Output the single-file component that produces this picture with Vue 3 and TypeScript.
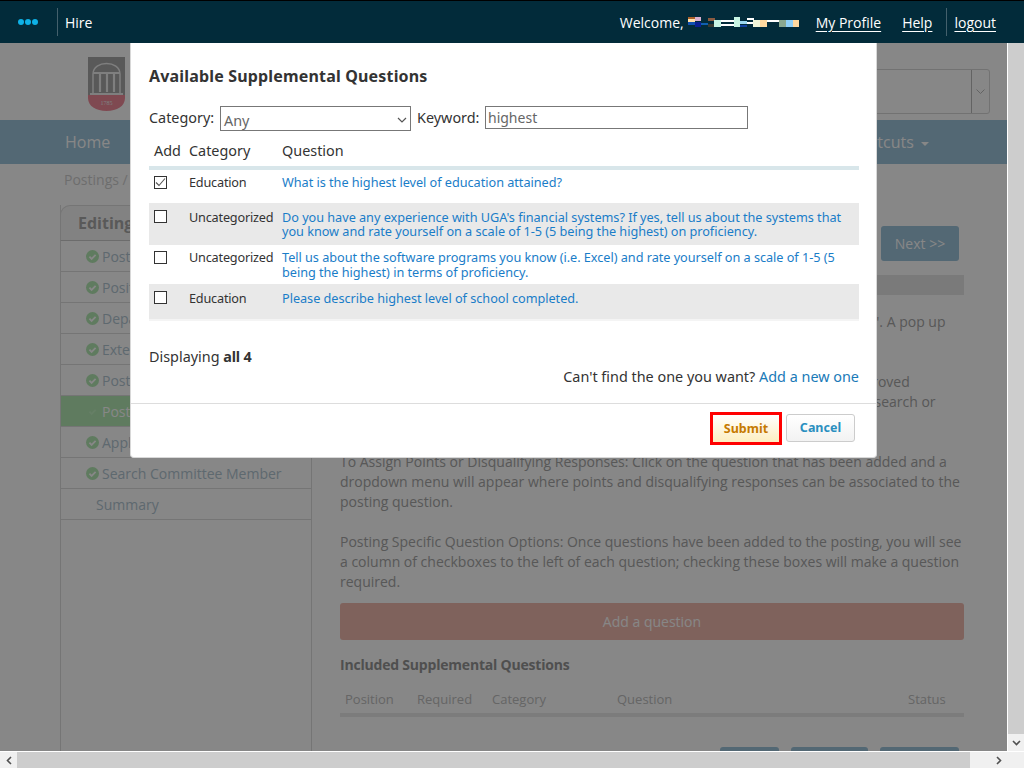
<script setup lang="ts">
const steps = [
  { label: 'Posting Details', done: true },
  { label: 'Position Details', done: true },
  { label: 'Department Details', done: true },
  { label: 'External Links', done: true },
  { label: 'Posting Documents', done: true },
  { label: 'Posting Questions', done: true, active: true },
  { label: 'Applicant Documents', done: true },
  { label: 'Search Committee Member', done: true },
  { label: 'Summary', done: false }
]

const questions = [
  { checked: true, category: 'Education', text: 'What is the highest level of education attained?', h: 'q1' },
  { checked: false, category: 'Uncategorized', text: "Do you have any experience with UGA's financial systems? If yes, tell us about the systems that you know and rate yourself on a scale of 1-5 (5 being the highest) on proficiency.", h: 'q2 alt' },
  { checked: false, category: 'Uncategorized', text: 'Tell us about the software programs you know (i.e. Excel) and rate yourself on a scale of 1-5 (5 being the highest) in terms of proficiency.', h: 'q3' },
  { checked: false, category: 'Education', text: 'Please describe highest level of school completed.', h: 'q4 alt' }
]
</script>

<template>
  <div class="page">
    <header class="topbar">
      <div class="dots"><i></i><i></i><i></i></div>
      <span class="product">Hire</span>
      <div class="user">
        <span>Welcome,</span>
        <svg class="redacted" width="111" height="11" viewBox="0 0 111 11" shape-rendering="crispEdges">
          <rect x="0" y="0" width="7" height="2" fill="#a8602a" />
          <rect x="0" y="2" width="7" height="3" fill="#ffe0a8" />
          <rect x="7" y="0" width="6" height="4" fill="#d8b0d0" />
          <rect x="0" y="5" width="7" height="3" fill="#1050b0" />
          <rect x="7" y="5" width="6" height="5" fill="#0a1f90" />
          <rect x="13" y="6" width="7" height="2" fill="#1060b0" />
          <rect x="20" y="1" width="7" height="3" fill="#8a5a40" />
          <rect x="20" y="7" width="6" height="3" fill="#3a3a30" />
          <rect x="26" y="3" width="7" height="7" fill="#c8f5e4" />
          <rect x="33" y="3" width="14" height="2" fill="#fff" />
          <rect x="33" y="7" width="14" height="2" fill="#fff" />
          <rect x="46" y="0" width="6" height="10" fill="#c8f5e4" />
          <rect x="52" y="4" width="7" height="3" fill="#9ad8f0" />
          <rect x="52" y="8" width="7" height="2" fill="#1040a0" />
          <rect x="59" y="1" width="7" height="2" fill="#fff" />
          <rect x="59" y="5" width="7" height="2" fill="#fff" />
          <rect x="65" y="3" width="7" height="7" fill="#f0f5d8" />
          <rect x="72" y="3" width="7" height="7" fill="#ffd9a0" />
          <rect x="79" y="3" width="12" height="2" fill="#fff" />
          <rect x="91" y="3" width="7" height="7" fill="#8aa890" />
          <rect x="98" y="3" width="7" height="7" fill="#90d0f8" />
          <rect x="105" y="3" width="6" height="7" fill="#ffd9a0" />
        </svg>
        <a class="my-profile">My Profile</a>
        <a class="help">Help</a>
        <span class="sep"></span>
        <a>logout</a>
      </div>
    </header>

    <div class="viewport">
      <div class="site">
        <div class="brand">
          <svg class="logo" width="37" height="54" viewBox="0 0 37 54">
            <rect width="37" height="38" fill="#a8a8a8" />
            <path d="M0 38h37v3c0 8-8 13-18.500 13S0 49 0 41z" fill="#f08a9a" />
            <path d="M5 37V17C5 3 32 3 32 17v20" fill="none" stroke="#f0f0f0" stroke-width="1.500" />
            <path d="M5 16h27M12 17v18M19 17v18M26 17v18M2 37h33" fill="none" stroke="#f0f0f0" stroke-width="2.200" />
            <text x="18.500" y="48" font-size="6" text-anchor="middle" fill="#eee" font-family="Liberation Serif, serif">1785</text>
          </svg>
          <div class="site-select"><span class="site-arrow"><svg width="9" height="5" viewBox="0 0 9 5"><path d="M.5.500l4 4 4-4" fill="none" stroke="#bbb" stroke-width="1" /></svg></span></div>
        </div>
        <nav class="mainnav">
          <span>Home</span>
          <span class="shortcuts">Shortcuts <b></b></span>
        </nav>
        <div class="crumb">Postings / Staff / Editing</div>

        <div class="columns">
          <aside class="sidebar">
            <div class="side-title">Editing Posting</div>
            <div v-for="s in steps" :key="s.label" class="step" :class="{ active: s.active, plain: !s.done }">
              <svg v-if="s.done" width="13" height="13" viewBox="0 0 13 13">
                <circle cx="6.500" cy="6.500" r="6.500" fill="#b4e8b4" />
                <path d="M3.400 6.700l2.200 2.200 4-4" fill="none" stroke="#fff" stroke-width="1.800" />
              </svg>
              <span>{{ s.label }}</span>
            </div>
          </aside>
          <main class="content">
            <div class="next-row"><span class="blue-btn next">Next &gt;&gt;</span></div>
            <div class="band"></div>
            <p class="first">To Add a Question to the Posting: Click on the orange button with "Add a question". A pop up<br />window will appear.</p>
            <p>Select Questions: Choose from the list of questions that have been previously approved<br />by checking the box directly to the left of each question. You may also use the top search or<br />category filter to narrow the list.</p>
            <p>To Assign Points or Disqualifying Responses: Click on the question that has been added and a dropdown menu will appear where points and disqualifying responses can be associated to the posting question.</p>
            <p>Posting Specific Question Options: Once questions have been added to the posting, you will see a column of checkboxes to the left of each question; checking these boxes will make a question required.</p>
            <div class="add-question">Add a question</div>
            <h4>Included Supplemental Questions</h4>
            <div class="included">
              <span class="c1">Position</span><span class="c2">Required</span><span class="c3">Category</span><span class="c4">Question</span><span class="c5">Status</span>
            </div>
            <div class="bottom-btns"><span class="blue-btn b1"></span><span class="blue-btn b2"></span><span class="blue-btn b3"></span></div>
          </main>
        </div>
      </div>

      <div class="overlay"></div>

      <section class="modal">
        <div class="modal-body">
          <h3>Available Supplemental Questions</h3>
          <div class="filters">
            <label class="lab-cat">Category:</label>
            <div class="select"><span>Any</span>
              <svg width="10" height="6" viewBox="0 0 10 6"><path d="M1 1l4 4 4-4" fill="none" stroke="#555" stroke-width="1.200" /></svg>
            </div>
            <label class="lab-key">Keyword:</label>
            <div class="keyword">highest</div>
          </div>
          <div class="thead">
            <span class="col-add">Add</span><span class="col-cat">Category</span><span>Question</span>
          </div>
          <div v-for="q in questions" :key="q.text" class="row" :class="q.h">
            <span class="col-add">
              <span class="check">
                <svg v-if="q.checked" width="11" height="9" viewBox="0 0 11 9"><path d="M1 4.500l3 3 6-7" fill="none" stroke="#555" stroke-width="1.100" /></svg>
              </span>
            </span>
            <span class="col-cat">{{ q.category }}</span>
            <a class="q-text">{{ q.text }}</a>
          </div>
          <div class="displaying">Displaying <b>all 4</b></div>
          <div class="cant-find">Can't find the one you want? <a>Add a new one</a></div>
        </div>
        <footer class="modal-foot">
          <span class="btn submit">Submit</span>
          <span class="btn cancel">Cancel</span>
        </footer>
      </section>

      <div class="vscroll">
        <span class="sb-btn"><svg width="9" height="6" viewBox="0 0 9 6"><path d="M1 5l3.500-3.500L8 5" fill="none" stroke="#505050" stroke-width="1.600" /></svg></span>
        <span class="sb-track"></span>
        <span class="sb-btn"><svg width="9" height="6" viewBox="0 0 9 6"><path d="M1 1l3.500 3.500L8 1" fill="none" stroke="#505050" stroke-width="1.600" /></svg></span>
      </div>
    </div>
    <div class="hscroll">
      <span class="hs-btn"><svg width="6" height="9" viewBox="0 0 6 9"><path d="M5 1L1.500 4.500 5 8" fill="none" stroke="#505050" stroke-width="1.600" /></svg></span>
      <span class="hs-thumb"></span>
      <span class="hs-btn"><svg width="6" height="9" viewBox="0 0 6 9"><path d="M1 1l3.500 3.500L1 8" fill="none" stroke="#505050" stroke-width="1.600" /></svg></span>
    </div>
  </div>
</template>

<style>
html, body { margin: 0; overflow: hidden; }
</style>

<style scoped>
.page {
  width: 1024px;
  height: 768px;
  display: flex;
  flex-direction: column;
  overflow: hidden;
  font-family: "Open Sans", "Liberation Sans", sans-serif;
  background: #fff;
}

.topbar {
  height: 42px;
  flex: none;
  background: #022b3a;
  border-top: 1px solid #000;
  color: #fff;
  display: flex;
  align-items: center;
  font-size: 14px;
  padding-right: 28px;
}
.dots { width: 57px; display: flex; gap: 1px; padding-left: 18px; box-sizing: border-box; }
.dots i { width: 6px; height: 6px; border-radius: 50%; background: #0eb1e6; }
.product { border-left: 1px solid #44606c; height: 28px; line-height: 30px; padding-left: 7px; }
.user { margin-left: auto; display: flex; align-items: center; }
.user a { text-decoration: underline; text-underline-offset: 3px; color: #fff; }
.redacted { margin-left: 4px; }
.my-profile { margin-left: 17px; }
.help { margin-left: 21px; }
.sep { width: 1px; height: 28px; background: #44606c; margin: 0 7px 0 14px; }

.viewport { position: relative; flex: 1; overflow: hidden; }
.site { height: 100%; color: #a6a6a6; font-size: 14px; }
.brand { height: 77px; display: flex; box-sizing: border-box; padding: 14px 0 0 88px; position: relative; }
.logo { display: block; }
.site-select {
  position: absolute; left: 870px; top: 26px; width: 120px; height: 45px;
  border: 1px solid #d8d8d8; border-radius: 3px; box-sizing: border-box;
}
.site-arrow {
  position: absolute; right: 0; top: 0; bottom: 0; width: 17px; border-left: 1px solid #bbb;
  display: flex; align-items: center; justify-content: center;
}
.mainnav {
  height: 44px; background: #9dc4db; color: #fff; font-size: 16px;
  display: flex; align-items: center; justify-content: space-between; padding: 0 95px 0 65px;
}
.shortcuts b {
  display: inline-block; width: 0; height: 0; border: 4px solid transparent; border-top-color: #fff;
  border-bottom: 0; vertical-align: middle; margin-left: 3px;
}
.crumb { padding: 6px 0 0 64px; height: 41px; box-sizing: border-box; color: #cfcfcf; }
.columns { display: flex; padding-left: 60px; }
.sidebar { width: 252px; border-right: 1px solid #ddd; border-left: 1px solid #ddd; box-sizing: border-box; height: 600px; flex: none; color: #b2c6d2; }
.side-title {
  height: 36px; line-height: 35px; box-sizing: border-box; font-weight: 700; font-size: 16px; color: #a8a8a8; padding-left: 17px;
  border: 1px solid #ddd; border-bottom-color: #ccc; border-radius: 10px 10px 0 0; margin: 0 -1px; background: #f6f6f6;
}
.step {
  height: 31px; display: flex; align-items: center; gap: 3px; padding-left: 25px;
  border-bottom: 1px solid #ddd; box-sizing: border-box;
}
.step.active { background: #b4e8b4; color: #fff; }
.step.active path { stroke: #c0f0c0; }
.step.plain { padding-left: 35px; }
.content { flex: 1; padding: 21px 60px 0 28px; min-width: 0; line-height: 20px; }
.next-row { display: flex; justify-content: flex-end; padding-right: 5px; }
.blue-btn { display: block; background: #9dc4db; border-radius: 3px; color: #fff; }
.next { width: 78px; height: 35px; line-height: 35px; text-align: center; }
.band { height: 20px; background: #e6e6e6; margin-top: 14px; }
p { margin: 0 0 20px; white-space: normal; }
.first { margin-top: 17px; }
.add-question {
  height: 37px; line-height: 37px; text-align: center; background: #f0b9ae; color: #fff; border-radius: 3px; margin-top: -9px;
}
h4 { margin: 15px 0 0; font-size: 14px; font-weight: 700; color: #969696; letter-spacing: -0.2px; }
.included { position: relative; height: 34px; border-bottom: 4px solid #eaeaea; margin-top: 4px; font-size: 13px; color: #c0c0c0; }
.included span { position: absolute; top: 10px; }
.c1 { left: 5px; } .c2 { left: 77px; } .c3 { left: 152px; } .c4 { left: 277px; } .c5 { left: 568px; }
.bottom-btns { display: flex; justify-content: flex-end; gap: 12px; padding: 30px 5px 0 0; }
.b1 { width: 59px; height: 30px; } .b2 { width: 77px; height: 30px; } .b3 { width: 79px; height: 30px; }

.overlay { position: absolute; inset: 0; background: #000; opacity: 0.47; }

.modal {
  position: absolute; left: 130px; top: 0; width: 747px; height: 415px;
  background: #fff; box-sizing: border-box; border: 1px solid #d8d8d8; border-top: 0;
  border-radius: 0 0 4px 4px; color: #333; display: flex; flex-direction: column;
}
.modal-body { flex: 1; padding: 0 17px 0 18px; font-family: "Noto Sans", sans-serif; font-size: 14.4px; }
h3 { margin: 0; padding-top: 22px; height: 63px; box-sizing: border-box; font-size: 16px; font-weight: 700; color: #333; letter-spacing: 0.17px; }
.filters { display: flex; align-items: flex-start; height: 25px; }
.filters label { line-height: 23px; }
.lab-cat { width: 71px; flex: none; }
.lab-key { width: 68px; flex: none; }
.select {
  margin-right: 6px; width: 191px; height: 25px; box-sizing: border-box; border: 1px solid #777; color: #666;
  padding: 3px 3px 0 3px; display: flex; justify-content: space-between; align-items: center; flex: none;
}
.keyword {
  width: 263px; height: 23px; box-sizing: border-box; border: 1px solid #777; color: #666; padding-left: 2px; line-height: 21px; flex: none; font-size: 14px;
}
.thead { display: flex; height: 39px; padding-top: 10px; box-sizing: border-box; border-bottom: 4px solid #d8e6ea; }
.col-add { width: 40px; padding-left: 5px; box-sizing: border-box; flex: none; }
.col-cat { width: 93px; flex: none; }
.row { display: flex; font-size: 12.7px; line-height: 14px; box-sizing: border-box; letter-spacing: -0.03px; }
.row .col-cat { letter-spacing: -0.2px; }
.row .col-cat, .row .q-text { padding-top: 5px; }
.row .col-add { padding-top: 6px; }
.row.q1 { height: 33px; }
.row.q2 { height: 42px; }
.row.q3 { height: 39px; line-height: 15px; }
.row.q4 { height: 37px; border-bottom: 2px solid #f4f4f4; }
.alt .col-cat, .alt .q-text { padding-top: 7px; }
.alt .col-add { padding-top: 7px; }
.alt { background: #e9e9e9; }
.check {
  display: flex; align-items: center; justify-content: center;
  width: 13px; height: 13px; box-sizing: border-box; border: 1px solid #333; background: #fff;
}
.q-text { color: #1a7dc8; }
.displaying { margin-top: 26px; }
.displaying b { letter-spacing: -0.2px; }
.cant-find { text-align: right; margin-top: 1px; }
.cant-find a { color: #1a7ab8; }
.modal-foot {
  height: 48px; border-top: 1px solid #ddd; display: flex; justify-content: flex-end; align-items: center;
  gap: 4px; padding: 0 21px 5px 0; font-family: "Noto Sans", sans-serif; font-size: 12.5px;
}
.btn { display: block; text-align: center; box-sizing: border-box; font-weight: 700; }
.submit {
  width: 72px; height: 33px; line-height: 27px; border: 3px solid #f00; color: #c67a00;
  background: linear-gradient(#fff, #fdeec0);
}
.cancel {
  width: 69px; height: 28px; line-height: 26px; border: 1px solid #ccc; border-radius: 3px; color: #2a8fc0;
  background: linear-gradient(#fff, #f2f2f2);
}

.vscroll {
  position: absolute; right: 0; top: -43px; bottom: 0; width: 17px; background: #f0f0f0;
  display: flex; flex-direction: column; align-items: stretch; border-left: 1px solid #fff; box-sizing: border-box;
}
.sb-btn { height: 17px; display: flex; align-items: center; justify-content: center; flex: none; }
.sb-track { flex: 1; background: #cdcdcd; }
.hscroll { height: 17px; flex: none; display: flex; background: #f0f0f0; border-top: 1px solid #fff; box-sizing: border-box; padding-right: 17px; }
.hs-btn { width: 17px; flex: none; display: flex; align-items: center; justify-content: center; }
.hs-thumb { width: 953px; background: #cdcdcd; margin-right: auto; }
</style>
